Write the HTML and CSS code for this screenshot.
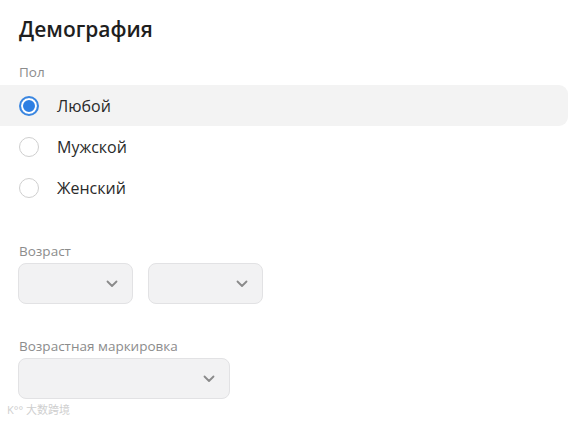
FILE: index.html
```html
<!DOCTYPE html>
<html lang="ru">
<head>
<meta charset="utf-8">
<link rel="stylesheet" href="styles.css">
</head>
<body>
<div class="page">
  <h2 class="title">Демография</h2>
  <div class="field-label">Пол</div>
  <div class="radio-list">
    <label class="radio-row active"><span class="radio checked"></span><span class="radio-text">Любой</span></label>
    <label class="radio-row"><span class="radio"></span><span class="radio-text">Мужской</span></label>
    <label class="radio-row"><span class="radio"></span><span class="radio-text">Женский</span></label>
  </div>
  <div class="field-label age-label">Возраст</div>
  <div class="select-row">
    <div class="select small"><svg class="chev" viewBox="0 0 12 8" width="12" height="8"><path d="M1.5 1.5 L6 6 L10.5 1.5" fill="none" stroke="#8a8a8a" stroke-width="1.8" stroke-linecap="round" stroke-linejoin="round"/></svg></div>
    <div class="select small"><svg class="chev" viewBox="0 0 12 8" width="12" height="8"><path d="M1.5 1.5 L6 6 L10.5 1.5" fill="none" stroke="#8a8a8a" stroke-width="1.8" stroke-linecap="round" stroke-linejoin="round"/></svg></div>
  </div>
  <div class="field-label rating-label">Возрастная маркировка</div>
  <div class="select-row">
    <div class="select wide"><svg class="chev" viewBox="0 0 12 8" width="12" height="8"><path d="M1.5 1.5 L6 6 L10.5 1.5" fill="none" stroke="#8a8a8a" stroke-width="1.8" stroke-linecap="round" stroke-linejoin="round"/></svg></div>
  </div>
  <div class="watermark">K°° 大数跨境</div>
</div>
</body>
</html>
```

FILE: styles.css
```css
html, body {
  margin: 0;
  padding: 0;
  background: #ffffff;
}
body {
  font-family: "Open Sans", "Noto Sans", "Noto Sans CJK SC", sans-serif;
  color: #222;
}
.page {
  width: 568px;
  padding-top: 14px;
}
.title {
  margin: 0 0 0 19px;
  font-size: 21px;
  line-height: 30px;
  font-weight: 600;
  color: #1e1e1e;
}
.field-label {
  margin-left: 19px;
  font-size: 13.5px;
  line-height: 16px;
  color: #8c8c8c;
}
.title + .field-label {
  margin-top: 20px;
}
.radio-list {
  margin-top: 5px;
  display: flex;
  flex-direction: column;
}
.radio-row {
  display: flex;
  align-items: center;
  height: 41px;
  padding-left: 19px;
  border-radius: 0 9px 9px 0;
}
.radio-row.active {
  background: #f3f3f3;
}
.radio {
  box-sizing: border-box;
  width: 20px;
  height: 20px;
  border-radius: 50%;
  border: 1.5px solid #cfcfcf;
  background: #fff;
  flex: none;
}
.radio.checked {
  border: 2px solid #3a86e0;
  background: #fff;
  box-shadow: inset 0 0 0 2px #fff, inset 0 0 0 10px #2d7fe3;
}
.radio-text {
  margin-left: 18px;
  font-size: 16px;
  color: #2a2a2a;
}
.age-label {
  margin-top: 35px;
}
.select-row {
  display: flex;
  gap: 15px;
  margin-left: 18px;
  margin-top: 4px;
}
.select {
  box-sizing: border-box;
  height: 41px;
  background: #f2f2f3;
  border: 1px solid #e2e2e4;
  border-radius: 8px;
  display: flex;
  align-items: center;
  justify-content: flex-end;
  padding-right: 14px;
}
.select.small {
  width: 115px;
}
.select.wide {
  width: 212px;
}
.rating-label {
  margin-top: 34px;
}
.watermark {
  margin-top: 4px;
  margin-left: 7px;
  font-size: 11px;
  line-height: 14px;
  color: #cfcfcf;
}
```
